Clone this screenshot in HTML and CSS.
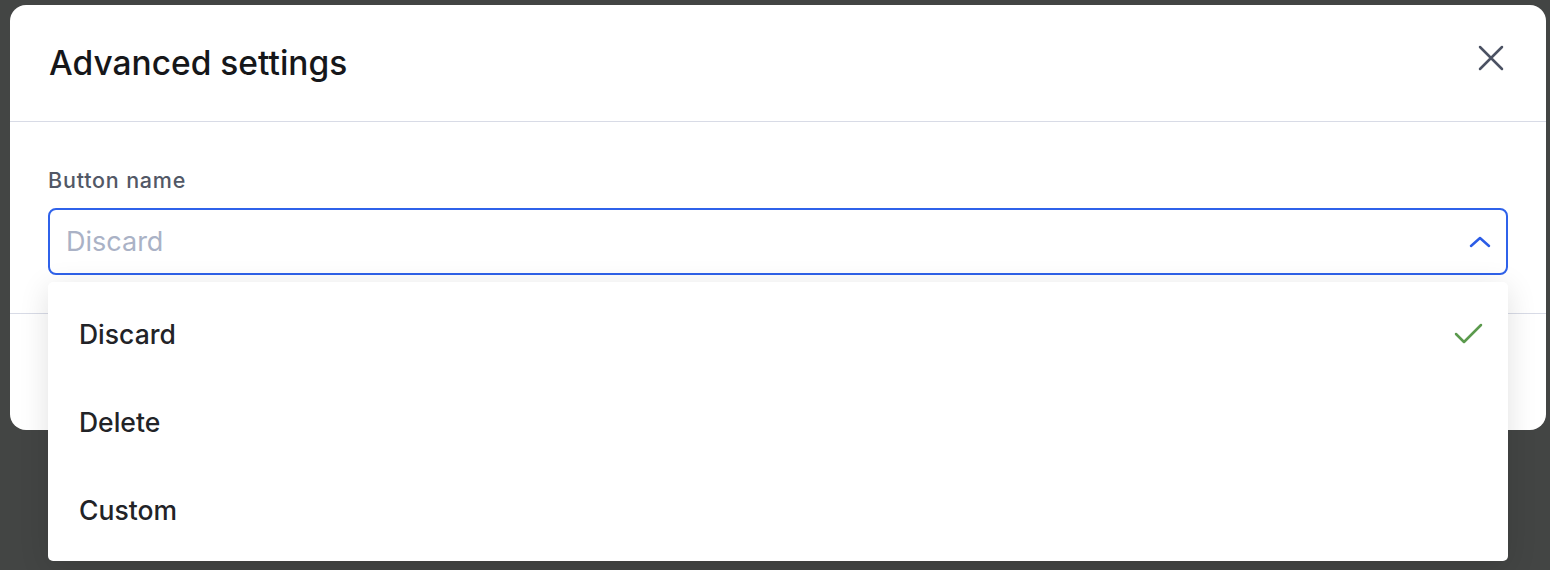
FILE: index.html
```html
<!DOCTYPE html>
<html lang="en">
<head>
    <meta charset="UTF-8">
    <title>Advanced settings</title>
    <link rel="stylesheet" href="styles.css">
</head>
<body>
    <div class="backdrop">
        <div class="modal">
            <div class="modal-header">
                <h2 class="modal-title">Advanced settings</h2>
                <button class="close-btn" aria-label="Close">
                    <svg width="26" height="26" viewBox="0 0 26 26" fill="none" stroke="#4b5263" stroke-width="2.5" stroke-linecap="round">
                        <path d="M2 2L24 24M24 2L2 24"/>
                    </svg>
                </button>
            </div>
            <div class="modal-body">
                <label class="field-label">Button name</label>
                <div class="select-wrap">
                    <div class="select-box">
                        <span class="placeholder">Discard</span>
                        <svg width="22" height="14" viewBox="0 0 22 14" fill="none" stroke="#2b5ce6" stroke-width="2.5" stroke-linecap="round" stroke-linejoin="round">
                            <path d="M2 11L11 3L20 11"/>
                        </svg>
                    </div>
                    <ul class="menu">
                        <li class="menu-item selected">
                            <span>Discard</span>
                            <svg width="30" height="24" viewBox="0 0 30 24" fill="none" stroke="#5b9a4d" stroke-width="2.5" stroke-linecap="round" stroke-linejoin="round">
                                <path d="M2 12L10 20L27 3"/>
                            </svg>
                        </li>
                        <li class="menu-item"><span>Delete</span></li>
                        <li class="menu-item"><span>Custom</span></li>
                    </ul>
                </div>
            </div>
            <div class="modal-footer"></div>
        </div>
    </div>
</body>
</html>
```

FILE: styles.css
```css
/* page */
body {
    margin: 0;
    background-color: #434544;
    font-family: 'Inter', 'Noto Sans', sans-serif;
    height: 570px;
    overflow: hidden;
}

.backdrop {
    padding: 5px 4px 0 10px;
}

/* modal */
.modal {
    background-color: #fff;
    border-radius: 16px;
    height: 425px;
    display: flex;
    flex-direction: column;
}

.modal-header {
    height: 117px;
    border-bottom: 1px solid #d8dbe6;
    display: flex;
    align-items: center;
    justify-content: space-between;
    padding: 0 42px 0 39px;
    box-sizing: border-box;
    flex-shrink: 0;
}

.modal-title {
    margin: 0;
    font-size: 33.5px;
    font-weight: 500;
    color: #16171a;
}

.close-btn {
    background: none;
    border: none;
    padding: 0;
    display: flex;
    margin-top: -10px;
}

.modal-body {
    padding: 45px 38px 38px 38px;
    display: flex;
    flex-direction: column;
}

.field-label {
    font-size: 21.5px;
    font-weight: 500;
    color: #525866;
    line-height: 26px;
    margin-bottom: 15px;
    letter-spacing: 0.8px;
}

/* select */
.select-wrap {
    position: relative;
}

.select-box {
    height: 67px;
    border: 2px solid #2f62ea;
    border-radius: 8px;
    box-sizing: border-box;
    display: flex;
    align-items: center;
    justify-content: space-between;
    padding: 0 15px 0 16px;
}

.placeholder {
    font-size: 27px;
    color: #aab2c6;
}

.menu {
    position: absolute;
    top: 74px;
    left: 0;
    right: 0;
    margin: 0;
    padding: 8px 0 7px;
    list-style: none;
    background-color: #fff;
    border-radius: 5px;
    box-shadow: 0 6px 30px rgba(0, 0, 0, 0.12);
    z-index: 2;
}

.menu-item {
    height: 88px;
    display: flex;
    align-items: center;
    justify-content: space-between;
    padding: 0 24px 0 31px;
    font-size: 26.5px;
    font-weight: 500;
    color: #222327;
}

.modal-footer {
    border-top: 1px solid #d8dbe6;
    flex: 1;
}
```
